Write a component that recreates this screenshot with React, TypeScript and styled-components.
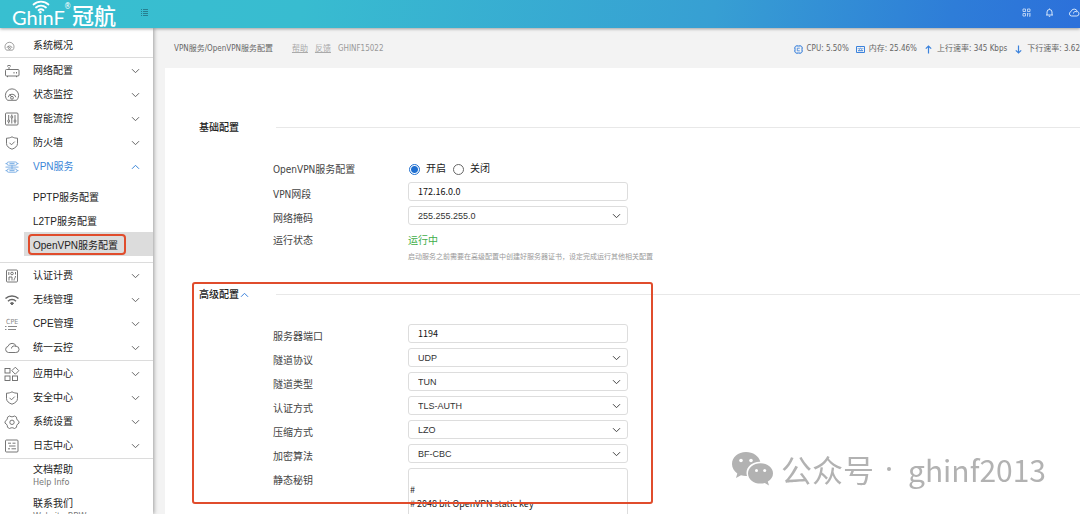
import React, { useState } from "react";
import styled, { createGlobalStyle } from "styled-components";

const latin = `"DejaVu Sans Condensed", "Noto Sans"`;
const cjk = `"Noto Sans CJK SC", sans-serif`;
const uiFont = `${latin}, ${cjk}`;
const navFont = `"Liberation Sans", ${cjk}`;

const GlobalStyle = createGlobalStyle`
  *, *::before, *::after { box-sizing: border-box; }
  body { margin: 0; background: #fff; color: #444; font-family: ${uiFont}; font-size: 10px; }
  button, input, select, textarea { font: inherit; color: inherit; margin: 0; }
  a { color: inherit; text-decoration: none; }
`;

const Page = styled.div`
  height: 100vh;
  display: flex;
  flex-direction: column;
  overflow: hidden;
`;

const TopBar = styled.header`
  flex: none;
  height: 28px;
  display: flex;
  align-items: center;
  padding: 0 0 0 12px;
  background: linear-gradient(100deg, #38bfd0 0%, #38bcd0 28%, #379fd3 66%, #2e7dd8 88%, #2c70da 100%);
  box-shadow: 0 1px 3px rgba(0, 0, 0, 0.35);
  position: relative;
  z-index: 3;
`;

const Brand = styled.a`
  position: relative;
  display: flex;
  align-items: flex-end;
  width: 120px;
  height: 28px;
  color: #fff;
  line-height: 28px;
`;

const BrandLatin = styled.span`
  font-family: Lato, sans-serif;
  font-size: 20px;
  line-height: 22px;
  width: 52px;
`;

const BrandMark = styled.sup`
  align-self: flex-start;
  font-size: 8px;
  line-height: 14px;
  width: 8px;
`;

const BrandCjk = styled.span`
  font-family: ${cjk};
  font-weight: 500;
  font-size: 22px;
  line-height: 28px;
`;

const BrandWaves = styled.svg`
  position: absolute;
  left: 20px;
  top: 0;
`;

const IconButton = styled.button<{ $tone?: string }>`
  border: 0;
  padding: 0;
  background: none;
  display: flex;
  color: ${(p) => p.$tone ?? "#d5e6fa"};
`;

const ToggleSlot = styled.div`
  margin: 0 0 3px 8px;
`;

const TopActions = styled.div`
  margin-left: auto;
  display: flex;
  align-items: center;
  gap: 14px;
  margin-bottom: 3px;
`;

const Body = styled.div`
  flex: 1;
  min-height: 0;
  display: flex;
`;

const Sidebar = styled.nav`
  flex: none;
  width: 153px;
  background: #fff;
  box-shadow: 1px 0 4px rgba(0, 0, 0, 0.35);
  position: relative;
  z-index: 2;
  font-family: ${navFont};
  color: #222;
  overflow: hidden;
`;

const NavGroup = styled.div<{ $top?: number; $bottom?: number }>`
  padding: ${(p) => p.$top ?? 0}px 0 ${(p) => p.$bottom ?? 1}px;
  border-bottom: 1px solid #dcdcdc;
`;

const NavItem = styled.button<{ $active?: boolean }>`
  width: 100%;
  height: 24px;
  border: 0;
  background: none;
  padding: 2px 13px 0 4px;
  display: grid;
  grid-template-columns: 29px 1fr 9px;
  align-items: center;
  text-align: left;
  line-height: 16px;
  color: ${(p) => (p.$active ? "#3a86d8" : "#222")};
`;

const NavIcon = styled.span<{ $active?: boolean }>`
  display: flex;
  color: ${(p) => (p.$active ? "#6ea6e2" : "#666")};
`;

const SubMenu = styled.div`
  padding: 6px 0 5px;
`;

const SubLink = styled.a<{ $current?: boolean }>`
  display: flex;
  align-items: center;
  height: 24px;
  margin-left: 24px;
  padding-left: 9px;
  position: relative;
  background: ${(p) => (p.$current ? "#dcdcdc" : "transparent")};
`;

const SubOutline = styled.span`
  position: absolute;
  left: 4px;
  top: 2px;
  width: 98px;
  height: 21px;
  border: 2px solid #e04c2c;
  border-radius: 4px;
`;

const HelpBlock = styled.a`
  display: block;
  padding: 4px 0 6px 33px;
  line-height: 14px;
`;

const HelpNote = styled.small`
  display: block;
  font-family: ${uiFont};
  font-size: 9px;
  line-height: 10px;
  color: #777;
`;

const Main = styled.main`
  flex: 1;
  min-width: 0;
  background: #f3f3f3;
  display: flex;
  flex-direction: column;
`;

const InfoBar = styled.div`
  flex: none;
  height: 40px;
  padding: 2px 0 0 21px;
  display: flex;
  align-items: center;
  gap: 7px;
  white-space: nowrap;
  overflow: hidden;
  font-size: 8px;
  line-height: 12px;
  color: #666;
`;

const Crumb = styled.span`
  margin-right: 12px;
`;

const Muted = styled.span`
  color: #999;
`;

const HelpLink = styled.a`
  color: #aaa;
  text-decoration: underline;
`;

const Stats = styled.div`
  margin-left: auto;
  display: flex;
  gap: 7px;
`;

const Stat = styled.span`
  display: flex;
  align-items: center;
  gap: 4px;
`;

const Panel = styled.form`
  flex: 1;
  min-height: 0;
  margin-left: 12px;
  padding: 51px 0 0 34px;
  background: #fff;
  overflow: hidden;
`;

const Section = styled.section<{ $gap: number }>`
  position: relative;
  margin-bottom: ${(p) => p.$gap}px;
`;

const SectionHead = styled.div`
  display: flex;
  align-items: center;
  height: 16px;
  margin-bottom: 22px;
`;

const SectionTitle = styled.h2`
  width: 77px;
  margin: 0;
  padding-top: 2px;
  display: flex;
  align-items: center;
  gap: 1px;
  font-size: 10px;
  line-height: 16px;
  font-weight: 500;
  color: #222;
`;

const Rule = styled.hr`
  flex: 1;
  margin: 0;
  border: 0;
  border-top: 1px solid #e8e8e8;
`;

const Rows = styled.div`
  display: flex;
  flex-direction: column;
  gap: 5px;
  padding-left: 74px;
`;

const Row = styled.div`
  display: grid;
  grid-template-columns: 135px 220px;
  align-items: start;
  min-height: 19px;
`;

const CenterRow = styled(Row)<{ $top?: number }>`
  align-items: center;
  height: 20px;
  padding-top: ${(p) => p.$top ?? 0}px;
`;

const RowLabel = styled.label<{ $flush?: boolean }>`
  line-height: 16px;
  height: 14px;
  margin-top: ${(p) => (p.$flush ? 0 : 5)}px;
`;

const Choices = styled.div`
  display: flex;
  gap: 7px;
  padding-left: 1px;
`;

const Choice = styled.label`
  display: flex;
  align-items: center;
  gap: 6px;
  height: 14px;
  line-height: 16px;
  color: #222;
`;

const Radio = styled.input`
  appearance: none;
  width: 11px;
  height: 11px;
  border: 1px solid #666;
  border-radius: 50%;
  background: #fff;
  &:checked {
    border-color: #1f6fd0;
    background: radial-gradient(circle, #1f6fd0 0 3px, #fff 4px);
  }
`;

const TextInput = styled.input`
  width: 100%;
  height: 19px;
  border: 1px solid #ddd;
  border-radius: 3px;
  padding: 0 9px;
  font-family: ${cjk};
  font-size: 9px;
  color: #111;
  background: #fff;
`;

const SelectBox = styled.div`
  display: grid;
  align-items: center;
  > * { grid-area: 1 / 1; }
  > svg { justify-self: end; margin-right: 7px; pointer-events: none; color: #444; }
`;

const Select = styled.select`
  appearance: none;
  width: 100%;
  height: 19px;
  border: 1px solid #ddd;
  border-radius: 3px;
  padding: 0 9px;
  font-family: "Liberation Sans", sans-serif;
  font-size: 9px;
  color: #333;
  background: #fff;
`;

const KeyArea = styled.textarea`
  width: 100%;
  height: 160px;
  border: 1px solid #ddd;
  border-radius: 3px;
  padding: 0 1px;
  resize: none;
  font-family: ${cjk};
  font-size: 9px;
  line-height: 14px;
  color: #222;
  overflow: hidden;
`;

const Running = styled.output`
  height: 14px;
  line-height: 16px;
  color: #3fae4a;
`;

const Hint = styled.p`
  margin: -3px 0 0 135px;
  font-size: 7px;
  line-height: 10px;
  color: #999;
  white-space: nowrap;
`;

const Highlight = styled.div`
  position: absolute;
  top: -4px;
  left: -7px;
  width: 461px;
  height: 222px;
  border: 2px solid #e04c2c;
  border-radius: 3px;
  pointer-events: none;
`;

const Watermark = styled.div`
  position: fixed;
  right: 34px;
  bottom: 23px;
  z-index: 4;
  display: flex;
  align-items: center;
  color: #b2b2b2;
  font-family: ${cjk};
  font-size: 30px;
  line-height: 44px;
  pointer-events: none;
`;

const WatermarkName = styled.span`
  margin-left: 7px;
  font-size: 31px;
`;

const WatermarkDot = styled.span`
  width: 4px;
  height: 4px;
  margin: 0 17px 0 13px;
  border-radius: 50%;
  background: #b2b2b2;
`;

function Chevron({ up, color }: { up?: boolean; color?: string }) {
  return (
    <svg width="9" height="6" viewBox="0 0 9 6" fill="none" stroke={color ?? "currentColor"} strokeWidth="1">
      <path d={up ? "M1 4.8 4.5 1.3 8 4.8" : "M1 1.2 4.5 4.7 8 1.2"} />
    </svg>
  );
}

const shapes: Record<string, React.ReactNode> = {
  gauge: (
    <>
      <path d="M3.500 13.300A6.600 6.600 0 1 1 12.500 13.300Z" />
      <path d="M4.200 10.200a3.900 3.900 0 0 1 7.600 0M7.300 9.600 5.800 7.300" />
      <circle cx="8" cy="10.800" r="1.400" />
    </>
  ),
  router: (
    <>
      <rect x="1.500" y="6.500" width="13.500" height="6.500" rx="1" />
      <path d="M5 6.500V4M3.500 13v1.200M12.500 13v1.200M10 9v1.500M12.500 9v1.500M3 3.300a2.800 2.800 0 0 1 4 0" />
    </>
  ),
  sliders: (
    <>
      <rect x="1.500" y="2" width="12.500" height="12" rx="1" />
      <path d="M4.700 4v5M4.700 11v1.500M7.800 3.500V5M7.800 7v5.500M11 4v5M11 11v1.500" />
      <circle cx="4.700" cy="10" r="1" />
      <circle cx="7.800" cy="6" r="1" />
      <circle cx="11" cy="10" r="1" />
    </>
  ),
  shield: (
    <>
      <path d="M8 1.800c1.700 1 3.500 1.400 5.500 1.400v5.300c0 2.800-2.300 4.500-5.500 5.700-3.200-1.200-5.500-2.900-5.500-5.700V3.200c2 0 3.800-.4 5.500-1.400Z" />
      <path d="m5.500 7.800 2 2 3.200-3.200" />
    </>
  ),
  vpn: (
    <>
      <rect x="3" y="3" width="10" height="3.200" rx="1.500" />
      <rect x="3" y="10" width="10" height="3.200" rx="1.500" />
      <path d="M1.500 8.100h13M5.500 4.600h5M5.500 11.600h5M8 6.200V10M1.500 4.600H3M13 4.600h1.500M1.500 11.600H3M13 11.600h1.500" />
    </>
  ),
  badge: (
    <>
      <rect x="2.500" y="2" width="11" height="12" rx="1" />
      <circle cx="8" cy="5.500" r="1.300" />
      <path d="M5 12.500V9h3v3.500M10 12.500c0-2 1.500-2.500 1.500-4.500M4.800 4v3M11.500 4v2.500" />
    </>
  ),
  wifi: (
    <>
      <path strokeWidth="1.500" d="M1.500 6.500a9.500 9.500 0 0 1 13 0M4 9.200a5.800 5.800 0 0 1 8 0" />
      <path fill="currentColor" d="M6.300 11.200a2.600 2.600 0 0 1 3.400 0L8 13Z" />
    </>
  ),
  cloud: <path d="M4.500 12.500a3.100 3.100 0 0 1-.5-6.100 4.300 4.300 0 0 1 8.200-.1 3.100 3.100 0 0 1-.5 6.200ZM7.500 8.500a2.500 2.500 0 0 1 4.300-1.800" />,
  apps: (
    <>
      <rect x="1" y="2.500" width="5" height="4.500" />
      <rect x="1" y="10" width="5" height="4.500" />
      <rect x="8.500" y="10" width="5" height="4.500" />
      <path d="m11.300 1.200 3.500 3.500-3.500 3.500-3.500-3.500Z" />
    </>
  ),
  gear: (
    <>
      <path d="m5.500 2 1.600.7h1.800L10.500 2l2 1.200.2 1.700.9 1.500 1.400 1.100v1.600l-1.400 1-.9 1.500-.2 1.700-2 1.200-1.600-.7H7.100l-1.600.7-2-1.200-.2-1.700-.9-1.500-1.400-1V7.500l1.400-1.100.9-1.500.2-1.700Z" />
      <circle cx="8" cy="8.300" r="2.200" />
    </>
  ),
  log: (
    <>
      <rect x="1.500" y="2" width="12.500" height="12" rx="1" />
      <path d="M4 5.200h3M8.500 5.200h3M5 8h6.500M4 10.800h2M7.500 10.800h4.500" />
    </>
  ),
};

function Glyph({ name, size = 16 }: { name: string; size?: number }) {
  if (name === "cpe") {
    return (
      <svg width="16" height="16" viewBox="0 0 16 16" fill="none" stroke="#888">
        <text x="2" y="8" fontSize="7" fontFamily="DejaVu Sans Condensed" fill="#888" stroke="none">CPE</text>
        <path d="M1 10.500h1.500M4 10.500h9M1 13.500h1.500M4 13.500h8" />
      </svg>
    );
  }
  return (
    <svg width={size} height={size} viewBox="0 0 16 16" fill="none" stroke="currentColor" strokeWidth="0.900">
      {shapes[name]}
    </svg>
  );
}

type Entry = [icon: string, label: string];
const firstGroup: Entry[] = [["router", "网络配置"], ["gauge", "状态监控"], ["sliders", "智能流控"], ["shield", "防火墙"]];
const secondGroup: Entry[] = [["badge", "认证计费"], ["wifi", "无线管理"], ["cpe", "CPE管理"], ["cloud", "统一云控"]];
const thirdGroup: Entry[] = [["apps", "应用中心"], ["shield", "安全中心"], ["gear", "系统设置"], ["log", "日志中心"]];
const vpnPages = ["PPTP服务配置", "L2TP服务配置", "OpenVPN服务配置"];

function NavList({ items }: { items: Entry[] }) {
  return (
    <>
      {items.map(([icon, label]) => (
        <NavItem type="button" key={label}>
          <NavIcon><Glyph name={icon} /></NavIcon>
          {label}
          <Chevron color="#666" />
        </NavItem>
      ))}
    </>
  );
}

function SelectRow({ id, label, value }: { id: string; label: string; value: string }) {
  return (
    <Row>
      <RowLabel htmlFor={id}>{label}</RowLabel>
      <SelectBox>
        <Select id={id} defaultValue={value}><option>{value}</option></Select>
        <Chevron />
      </SelectBox>
    </Row>
  );
}

const advanced: [string, string, string][] = [
  ["proto", "隧道协议", "UDP"],
  ["device", "隧道类型", "TUN"],
  ["auth", "认证方式", "TLS-AUTH"],
  ["comp", "压缩方式", "LZO"],
  ["cipher", "加密算法", "BF-CBC"],
];

export default function App() {
  const [enabled, setEnabled] = useState(true);
  return (
    <Page>
      <GlobalStyle />
      <TopBar>
        <Brand href="#home">
          <BrandWaves width="18" height="14" viewBox="0 0 18 14" fill="none" stroke="#fff" strokeWidth="1.800" strokeLinecap="round">
            <path d="M1.500 4.500a11 11 0 0 1 15 0M4 7.500a7.500 7.500 0 0 1 10 0M6.500 10.200a4 4 0 0 1 5 0" />
          </BrandWaves>
          <BrandLatin>GhinF</BrandLatin>
          <BrandMark>®</BrandMark>
          <BrandCjk>冠航</BrandCjk>
        </Brand>
        <ToggleSlot>
          <IconButton type="button" $tone="#277f90" aria-label="菜单">
            <svg width="9" height="9" viewBox="0 0 9 9" stroke="currentColor" strokeWidth="1">
              <path d="M1 1.500h1M3 1.500h5M1 3.500h1M3 3.500h5M1 5.500h1M3 5.500h5M1 7.500h1M3 7.500h5" />
            </svg>
          </IconButton>
        </ToggleSlot>
        <TopActions>
          <IconButton type="button" aria-label="二维码">
            <svg width="9" height="9" viewBox="0 0 9 9" fill="none" stroke="currentColor" strokeWidth="0.800">
              <path d="M1 1h2.500v2.500H1ZM5.500 1H8v2.500H5.500ZM1 5.500h2.500V8H1ZM5.500 5v3.500M7 5v1.500M8 5v3.500M7 8h1" />
            </svg>
          </IconButton>
          <IconButton type="button" aria-label="通知">
            <svg width="9" height="9" viewBox="0 0 9 9" fill="none" stroke="currentColor" strokeWidth="1">
              <path d="M1 7h7M2 7V4a2.500 2.500 0 0 1 5 0v3M4.500 0.500v1M3.800 8.300h1.400" />
            </svg>
          </IconButton>
          <IconButton type="button" aria-label="云平台">
            <svg width="12" height="9" viewBox="0 0 12 9" fill="none" stroke="currentColor" strokeWidth="1">
              <path d="M3.500 8a2.300 2.300 0 0 1-.4-4.500 3.200 3.200 0 0 1 6.200 0A2.300 2.300 0 0 1 8.900 8ZM5.500 5.500a2 2 0 0 1 3.500-1.400" />
            </svg>
          </IconButton>
        </TopActions>
      </TopBar>
      <Body>
        <Sidebar>
          <NavGroup $top={5} $bottom={0}>
            <NavItem type="button">
              <NavIcon><Glyph name="gauge" size={11} /></NavIcon>
              系统概况
            </NavItem>
          </NavGroup>
          <NavGroup>
            <NavList items={firstGroup} />
            <NavItem type="button" $active aria-expanded="true">
              <NavIcon $active><Glyph name="vpn" /></NavIcon>
              VPN服务
              <Chevron up />
            </NavItem>
            <SubMenu>
              {vpnPages.map((page, i) => (
                <SubLink href={`#vpn-${i}`} key={page} $current={i === 2}>
                  {page}
                  {i === 2 && <SubOutline />}
                </SubLink>
              ))}
            </SubMenu>
          </NavGroup>
          <NavGroup><NavList items={secondGroup} /></NavGroup>
          <NavGroup><NavList items={thirdGroup} /></NavGroup>
          <HelpBlock href="#help">文档帮助<HelpNote>Help Info</HelpNote></HelpBlock>
          <HelpBlock href="#contact">联系我们<HelpNote>Website BBW</HelpNote></HelpBlock>
        </Sidebar>
        <Main>
          <InfoBar>
            <Crumb>VPN服务/OpenVPN服务配置</Crumb>
            <HelpLink href="#help">帮助</HelpLink>
            <HelpLink href="#feedback">反馈</HelpLink>
            <Muted>GHINF15022</Muted>
            <Stats>
              <Stat>
                <svg width="9" height="9" viewBox="0 0 9 9" fill="none" stroke="#3b82dc" strokeWidth="1">
                  <rect x="1" y="1" width="7" height="7" rx="1.500" />
                  <path d="M5.800 3.200H3.300v2.600h2.500M3 0v1M6 0v1M3 8v1M6 8v1M0 3h1M0 6h1M8 3h1M8 6h1" strokeWidth="0.800" />
                </svg>
                CPU: 5.50%
              </Stat>
              <Stat>
                <svg width="9" height="9" viewBox="0 0 9 9" fill="none" stroke="#3b82dc" strokeWidth="1">
                  <path d="M0.500 1.500h8v6h-8ZM2 5.700h5M2 3.300l1 1 1.500-1L6 4.300l1-1" />
                </svg>
                内存: 25.46%
              </Stat>
              <Stat>
                <svg width="9" height="9" viewBox="0 0 9 9" fill="none" stroke="#3b82dc" strokeWidth="1.200"><path d="M4.500 8.500V1M1.800 3.700 4.500 1l2.700 2.700" /></svg>
                上行速率: 345 Kbps
              </Stat>
              <Stat>
                <svg width="9" height="9" viewBox="0 0 9 9" fill="none" stroke="#3b82dc" strokeWidth="1.200"><path d="M4.500 0.500V8M1.800 5.300 4.500 8l2.700-2.700" /></svg>
                下行速率: 3.62
              </Stat>
            </Stats>
          </InfoBar>
          <Panel>
            <Section $gap={24}>
              <SectionHead><SectionTitle>基础配置</SectionTitle><Rule /></SectionHead>
              <Rows>
                <CenterRow as="div" $top={4}>
                  <RowLabel as="span" $flush>OpenVPN服务配置</RowLabel>
                  <Choices role="radiogroup" aria-label="OpenVPN服务配置">
                    <Choice><Radio type="radio" name="service" checked={enabled} onChange={() => setEnabled(true)} />开启</Choice>
                    <Choice><Radio type="radio" name="service" checked={!enabled} onChange={() => setEnabled(false)} />关闭</Choice>
                  </Choices>
                </CenterRow>
                <Row>
                  <RowLabel htmlFor="subnet">VPN网段</RowLabel>
                  <TextInput id="subnet" defaultValue="172.16.0.0" />
                </Row>
                <SelectRow id="mask" label="网络掩码" value="255.255.255.0" />
                <CenterRow>
                  <RowLabel htmlFor="state" $flush>运行状态</RowLabel>
                  <Running id="state">运行中</Running>
                </CenterRow>
                <Hint>启动服务之前需要在高级配置中创建好服务器证书，设定完成运行其他相关配置</Hint>
              </Rows>
            </Section>
            <Section $gap={0}>
              <SectionHead><SectionTitle>高级配置<Chevron up color="#3b82dc" /></SectionTitle><Rule /></SectionHead>
              <Rows>
                <Row>
                  <RowLabel htmlFor="port">服务器端口</RowLabel>
                  <TextInput id="port" defaultValue="1194" />
                </Row>
                {advanced.map(([id, label, value]) => <SelectRow key={id} id={id} label={label} value={value} />)}
                <Row>
                  <RowLabel htmlFor="key">静态秘钥</RowLabel>
                  <KeyArea id="key" defaultValue={"\n#\n# 2048 bit OpenVPN static key\n#"} />
                </Row>
              </Rows>
              <Highlight />
            </Section>
          </Panel>
        </Main>
      </Body>
      <Watermark>
        <svg width="43" height="36" viewBox="0 0 43 36" fill="#b2b2b2">
          <path d="M15 1C7 1 1 6.300 1 13c0 3.900 2 7.200 5.300 9.400L5 27l5-2.700c1.600.5 3.200.7 5 .7h1c-.3-1-.5-2-.5-3 0-6.200 5.800-11.200 13-11.200h.8C28 5 22 1 15 1Z" />
          <path d="M29.500 12.200c-7 0-12.500 4.500-12.500 10.200s5.500 10.200 12.500 10.200c1.500 0 3-.2 4.300-.6l4.200 2.500-1.200-4c3.200-2 5.200-4.800 5.200-8.100 0-5.700-5.500-10.200-12.500-10.200Z" />
          <g fill="#fff">
            <circle cx="10" cy="9.500" r="1.800" /><circle cx="20" cy="9.500" r="1.800" />
            <circle cx="25.500" cy="19.500" r="1.500" /><circle cx="33.700" cy="19.500" r="1.500" />
          </g>
        </svg>
        <WatermarkName>公众号</WatermarkName>
        <WatermarkDot />
        <span>ghinf2013</span>
      </Watermark>
    </Page>
  );
}
